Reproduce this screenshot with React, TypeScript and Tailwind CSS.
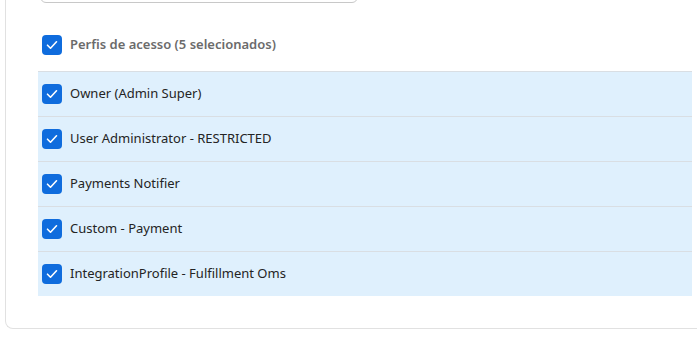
import React from 'react'

const profiles = [
  'Owner (Admin Super)',
  'User Administrator - RESTRICTED',
  'Payments Notifier',
  'Custom - Payment',
  'IntegrationProfile - Fulfillment Oms',
]

const Check: React.FC = () => (
  <span className="flex h-5 w-5 shrink-0 items-center justify-center rounded-[4px] bg-[#0f6cdd]">
    <svg viewBox="0 0 20 20" className="h-5 w-5" fill="none">
      <path d="M5.5 10.2l3 3 6-6.4" stroke="#fff" strokeWidth="1.6" strokeLinecap="round" strokeLinejoin="round" />
    </svg>
  </span>
)

export default function App() {
  return (
    <div
      className="h-[356px] w-[697px] overflow-hidden bg-white"
      style={{ fontFamily: '"Noto Sans", "Open Sans", sans-serif' }}
    >
      <div className="ml-[5px] mt-[-20px] w-[720px] rounded-bl-lg border-b border-l border-[#e1e1e1] pb-[32px] pl-[32px]">
        <div className="ml-[2px] h-[23px] w-[318px] rounded-md border border-[#c8c8c8]" />
        <div className="mt-[32px] flex h-[20px] items-center gap-2 pl-[4px]">
          <Check />
          <span className="text-[13px] font-semibold text-[#6b6b6b]">Perfis de acesso (5 selecionados)</span>
        </div>
        <div className="mt-[16px] w-[654px]">
          {profiles.map((p) => (
            <div key={p} className="flex h-[45px] items-center gap-2 border-t border-[#d9dee3] bg-[#dff0fd] pl-[4px]">
              <Check />
              <span className="text-[13px] text-[#242424]">{p}</span>
            </div>
          ))}
        </div>
      </div>
    </div>
  )
}
